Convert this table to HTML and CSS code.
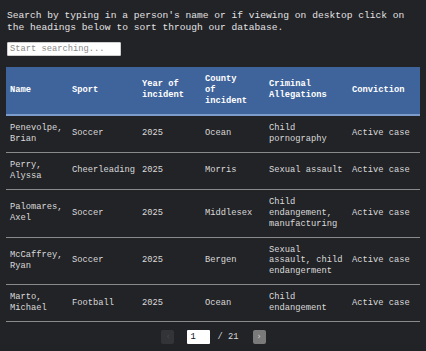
FILE: index.html
```html
<!DOCTYPE html>
<html lang="en">
<head>
<meta charset="utf-8">
<title>Database</title>
<link rel="stylesheet" href="styles.css">
</head>
<body>
<main class="page">
  <p class="intro">Search by typing in a person's name or if viewing on desktop click on the headings below to sort through our database.</p>
  <input class="search" type="text" placeholder="Start searching...">
  <table class="data">
    <colgroup>
      <col class="c-name"><col class="c-sport"><col class="c-year"><col class="c-county"><col class="c-crime"><col class="c-conv">
    </colgroup>
    <thead>
      <tr>
        <th>Name</th><th>Sport</th><th>Year of incident</th><th>County of incident</th><th>Criminal Allegations</th><th>Conviction</th>
      </tr>
    </thead>
    <tbody>
      <tr><td>Penevolpe, Brian</td><td>Soccer</td><td>2025</td><td>Ocean</td><td>Child pornography</td><td>Active case</td></tr>
      <tr><td>Perry, Alyssa</td><td>Cheerleading</td><td>2025</td><td>Morris</td><td>Sexual assault</td><td>Active case</td></tr>
      <tr><td>Palomares, Axel</td><td>Soccer</td><td>2025</td><td>Middlesex</td><td>Child endangement, manufacturing</td><td>Active case</td></tr>
      <tr><td>McCaffrey, Ryan</td><td>Soccer</td><td>2025</td><td>Bergen</td><td>Sexual assault, child endangerment</td><td>Active case</td></tr>
      <tr><td>Marto, Michael</td><td>Football</td><td>2025</td><td>Ocean</td><td>Child endangement</td><td>Active case</td></tr>
    </tbody>
  </table>
  <nav class="pager">
    <button class="pg-btn pg-prev" type="button">&#8249;</button>
    <input class="pg-input" type="text" value="1">
    <span class="pg-total">/ 21</span>
    <button class="pg-btn pg-next" type="button">&#8250;</button>
  </nav>
</main>
</body>
</html>
```
FILE: styles.css
```css
html, body {
  margin: 0;
  padding: 0;
  background: #222327;
  overflow: hidden;
}
body {
  font-family: "Liberation Mono", "DejaVu Sans Mono", monospace;
  color: #dcdcdc;
}
.page {
  padding: 0 6px 0 6px;
}
.intro {
  margin: 10px 0 0 1px;
  font-size: 9.6px;
  line-height: 11.5px;
  color: #e2e2e2;
}
.search {
  display: block;
  box-sizing: border-box;
  margin: 9px 0 0 1px;
  width: 114px;
  height: 14px;
  padding: 0 2px;
  border: 1px solid #cfcfcf;
  border-radius: 1px;
  background: #fff;
  font-family: inherit;
  font-size: 8.75px;
  color: #222;
  outline: none;
}
.search::placeholder {
  color: #8a8a8a;
}
.data {
  margin-top: 11px;
  width: 414px;
  table-layout: fixed;
  border-collapse: collapse;
  font-size: 8.75px;
  line-height: 10.95px;
}
.c-name { width: 62px; }
.c-sport { width: 70px; }
.c-year { width: 63px; }
.c-county { width: 64px; }
.c-crime { width: 83px; }
.c-conv { width: 72px; }
.data th {
  background: #3f649b;
  color: #fff;
  font-weight: bold;
  text-align: left;
  padding: 7px 15px 7px 4px;
  border-bottom: 2px solid #7c9ccb;
  vertical-align: middle;
}
.data td {
  padding: 7px 3px 7px 4px;
  border-bottom: 1px solid #8a8a8a;
  vertical-align: middle;
  color: #dadada;
}
.pager {
  display: flex;
  justify-content: center;
  align-items: center;
  margin-top: 8px;
  padding-left: 1px;
}
.pg-btn {
  box-sizing: border-box;
  width: 13px;
  height: 14px;
  padding: 0;
  border: none;
  border-radius: 2px;
  font-family: "DejaVu Sans", sans-serif;
  font-size: 8px;
  line-height: 14px;
}
.pg-prev {
  background: #333438;
  color: #4a4b50;
}
.pg-next {
  background: #7a7a7a;
  color: #d6d6d6;
  margin-left: 14px;
}
.pg-input {
  box-sizing: border-box;
  width: 23px;
  height: 14px;
  margin-left: 13px;
  padding: 0 3px;
  border: none;
  border-radius: 1px;
  background: #fff;
  font-family: inherit;
  font-size: 8.75px;
  color: #111;
}
.pg-total {
  margin-left: 7px;
  font-size: 8.75px;
  color: #d8d8d8;
}
```
